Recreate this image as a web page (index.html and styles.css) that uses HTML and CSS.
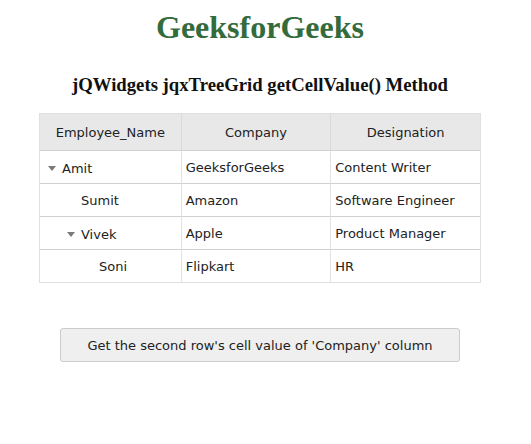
FILE: index.html
```html
<!DOCTYPE html>
<html>
<head>
<meta charset="utf-8">
<link rel="stylesheet" href="styles.css">
</head>
<body>
<div class="page">
  <h1 class="title">GeeksforGeeks</h1>
  <h3 class="subtitle">jQWidgets jqxTreeGrid getCellValue() Method</h3>
  <div class="grid">
    <table class="tree">
      <thead>
        <tr>
          <th class="c1">Employee_Name</th>
          <th class="c2">Company</th>
          <th class="c3">Designation</th>
        </tr>
      </thead>
      <tbody>
        <tr>
          <td><span class="name lvl0"><span class="toggle"></span>Amit</span></td>
          <td>GeeksforGeeks</td>
          <td>Content Writer</td>
        </tr>
        <tr>
          <td><span class="name lvl1">Sumit</span></td>
          <td>Amazon</td>
          <td>Software Engineer</td>
        </tr>
        <tr>
          <td><span class="name lvl1t"><span class="toggle"></span>Vivek</span></td>
          <td>Apple</td>
          <td>Product Manager</td>
        </tr>
        <tr>
          <td><span class="name lvl2">Soni</span></td>
          <td>Flipkart</td>
          <td>HR</td>
        </tr>
      </tbody>
    </table>
  </div>
  <div class="actions">
    <button class="btn">Get the second row's cell value of 'Company' column</button>
  </div>
</div>
</body>
</html>
```

FILE: styles.css
```css
html, body {
  margin: 0;
  padding: 0;
  background: #ffffff;
}
.page {
  width: 520px;
  text-align: center;
  font-family: "Liberation Serif", "Times New Roman", serif;
}
.title {
  margin: 0;
  padding-top: 9px;
  font-size: 32px;
  line-height: 37px;
  font-weight: bold;
  color: #336b3c;
}
.subtitle {
  margin: 0;
  padding-top: 28px;
  font-size: 18.72px;
  line-height: 22px;
  font-weight: bold;
  color: #111111;
}
.grid {
  display: flex;
  justify-content: center;
  margin-top: 17px;
}
.tree {
  width: 442px;
  border-collapse: separate;
  border-spacing: 0;
  border: 1px solid #e0e0e0;
  font-family: "DejaVu Sans", Verdana, sans-serif;
  font-size: 13px;
  color: #222222;
  text-align: left;
}
.tree th {
  background: #e8e8e8;
  font-weight: normal;
  text-align: center;
  height: 36px;
  padding: 0;
  border-bottom: 1px solid #d0d0d0;
  border-left: 1px solid #dadada;
}
.tree th:first-child,
.tree td:first-child {
  border-left: none;
}
.c1 { width: 141px; }
.c2 { width: 149px; }
.c3 { width: 149px; }
.tree td {
  height: 32px;
  padding: 0 0 0 4px;
  border-left: 1px solid #e2e2e2;
  border-bottom: 1px solid #cfcfcf;
  white-space: nowrap;
}
.tree tbody tr:last-child td {
  border-bottom: none;
}
.name {
  display: inline-flex;
  align-items: center;
}
.lvl0 { padding-left: 18px; }
.lvl1 { padding-left: 37px; }
.lvl1t { padding-left: 23px; }
.lvl2 { padding-left: 55px; }
.toggle {
  width: 0;
  height: 0;
  border-left: 4px solid transparent;
  border-right: 4px solid transparent;
  border-top: 5px solid #7a7a7a;
  margin-right: 6px;
  margin-left: -14px;
}
.lvl0 .toggle { margin-left: -14px; }
.lvl1t .toggle { margin-left: 0; }
.actions {
  display: flex;
  justify-content: center;
  margin-top: 45px;
}
.btn {
  width: 400px;
  height: 34px;
  background: #efefef;
  border: 1px solid #cccccc;
  border-radius: 3px;
  font-family: "DejaVu Sans", Verdana, sans-serif;
  font-size: 13px;
  color: #222222;
  padding: 0;
}
```
